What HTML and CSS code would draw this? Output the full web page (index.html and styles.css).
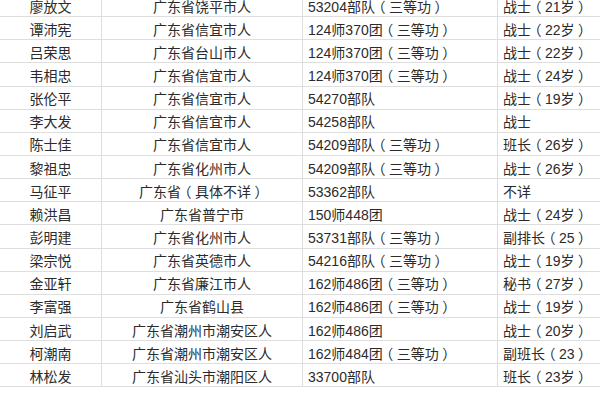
FILE: index.html
```html
<!DOCTYPE html>
<html lang="zh-CN">
<head>
<meta charset="utf-8">
<link rel="stylesheet" href="styles.css">
</head>
<body>
<table class="roster">
<colgroup><col class="c-name"><col class="c-place"><col class="c-unit"><col class="c-rank"></colgroup>
<tbody>
<tr><td class="mid">廖放文</td><td class="mid">广东省饶平市人</td><td>53204部队<span class="pb">（</span>三等功<span class="pb">）</span></td><td>战士<span class="pb">（</span>21岁<span class="pb">）</span></td></tr>
<tr><td class="mid">谭沛宪</td><td class="mid">广东省信宜市人</td><td>124师370团<span class="pb">（</span>三等功<span class="pb">）</span></td><td>战士<span class="pb">（</span>22岁<span class="pb">）</span></td></tr>
<tr><td class="mid">吕荣思</td><td class="mid">广东省台山市人</td><td>124师370团<span class="pb">（</span>三等功<span class="pb">）</span></td><td>战士<span class="pb">（</span>22岁<span class="pb">）</span></td></tr>
<tr><td class="mid">韦相忠</td><td class="mid">广东省信宜市人</td><td>124师370团<span class="pb">（</span>三等功<span class="pb">）</span></td><td>战士<span class="pb">（</span>24岁<span class="pb">）</span></td></tr>
<tr><td class="mid">张伦平</td><td class="mid">广东省信宜市人</td><td>54270部队</td><td>战士<span class="pb">（</span>19岁<span class="pb">）</span></td></tr>
<tr><td class="mid">李大发</td><td class="mid">广东省信宜市人</td><td>54258部队</td><td>战士</td></tr>
<tr><td class="mid">陈士佳</td><td class="mid">广东省信宜市人</td><td>54209部队<span class="pb">（</span>三等功<span class="pb">）</span></td><td>班长<span class="pb">（</span>26岁<span class="pb">）</span></td></tr>
<tr><td class="mid">黎祖忠</td><td class="mid">广东省化州市人</td><td>54209部队<span class="pb">（</span>三等功<span class="pb">）</span></td><td>战士<span class="pb">（</span>26岁<span class="pb">）</span></td></tr>
<tr><td class="mid">马征平</td><td class="mid">广东省<span class="pb">（</span>具体不详<span class="pb">）</span></td><td>53362部队</td><td>不详</td></tr>
<tr><td class="mid">赖洪昌</td><td class="mid">广东省普宁市</td><td>150师448团</td><td>战士<span class="pb">（</span>24岁<span class="pb">）</span></td></tr>
<tr><td class="mid">彭明建</td><td class="mid">广东省化州市人</td><td>53731部队<span class="pb">（</span>三等功<span class="pb">）</span></td><td>副排长<span class="pb">（</span>25<span class="pb">）</span></td></tr>
<tr><td class="mid">梁宗悦</td><td class="mid">广东省英德市人</td><td>54216部队<span class="pb">（</span>三等功<span class="pb">）</span></td><td>战士<span class="pb">（</span>19岁<span class="pb">）</span></td></tr>
<tr><td class="mid">金亚轩</td><td class="mid">广东省廉江市人</td><td>162师486团<span class="pb">（</span>三等功<span class="pb">）</span></td><td>秘书<span class="pb">（</span>27岁<span class="pb">）</span></td></tr>
<tr><td class="mid">李富强</td><td class="mid">广东省鹤山县</td><td>162师486团<span class="pb">（</span>三等功<span class="pb">）</span></td><td>战士<span class="pb">（</span>19岁<span class="pb">）</span></td></tr>
<tr><td class="mid">刘启武</td><td class="mid">广东省潮州市潮安区人</td><td>162师486团</td><td>战士<span class="pb">（</span>20岁<span class="pb">）</span></td></tr>
<tr><td class="mid">柯潮南</td><td class="mid">广东省潮州市潮安区人</td><td>162师484团<span class="pb">（</span>三等功<span class="pb">）</span></td><td>副班长<span class="pb">（</span>23<span class="pb">）</span></td></tr>
<tr><td class="mid">林松发</td><td class="mid">广东省汕头市潮阳区人</td><td>33700部队</td><td>班长<span class="pb">（</span>23岁<span class="pb">）</span></td></tr>
</tbody>
</table>
</body>
</html>
```

FILE: styles.css
```css
html, body {
  margin: 0;
  padding: 0;
  background: #ffffff;
  overflow: hidden;
}

body {
  width: 600px;
  height: 400px;
}

.roster {
  border-collapse: collapse;
  table-layout: fixed;
  width: 660px;
  margin: -7px 0 0 -1px;
  font-family: "Liberation Sans", "Noto Sans CJK SC", sans-serif;
  font-size: 14px;
  color: #2b2b2b;
}

.c-name { width: 102px; }
.c-place { width: 201px; }
.c-unit { width: 195px; }
.c-rank { width: 162px; }

.roster td {
  border: 1px solid #dedede;
  height: 23.15px;
  padding: 3px 5px 0 5px;
  box-sizing: border-box;
  white-space: nowrap;
  line-height: 18px;
  vertical-align: middle;
  text-align: left;
}

.roster td.mid {
  text-align: center;
}

/* half-width bracket glyph, centred in a full em */
.roster .pb {
  font-feature-settings: "halt" 1;
  padding: 0 0.25em;
}
```
